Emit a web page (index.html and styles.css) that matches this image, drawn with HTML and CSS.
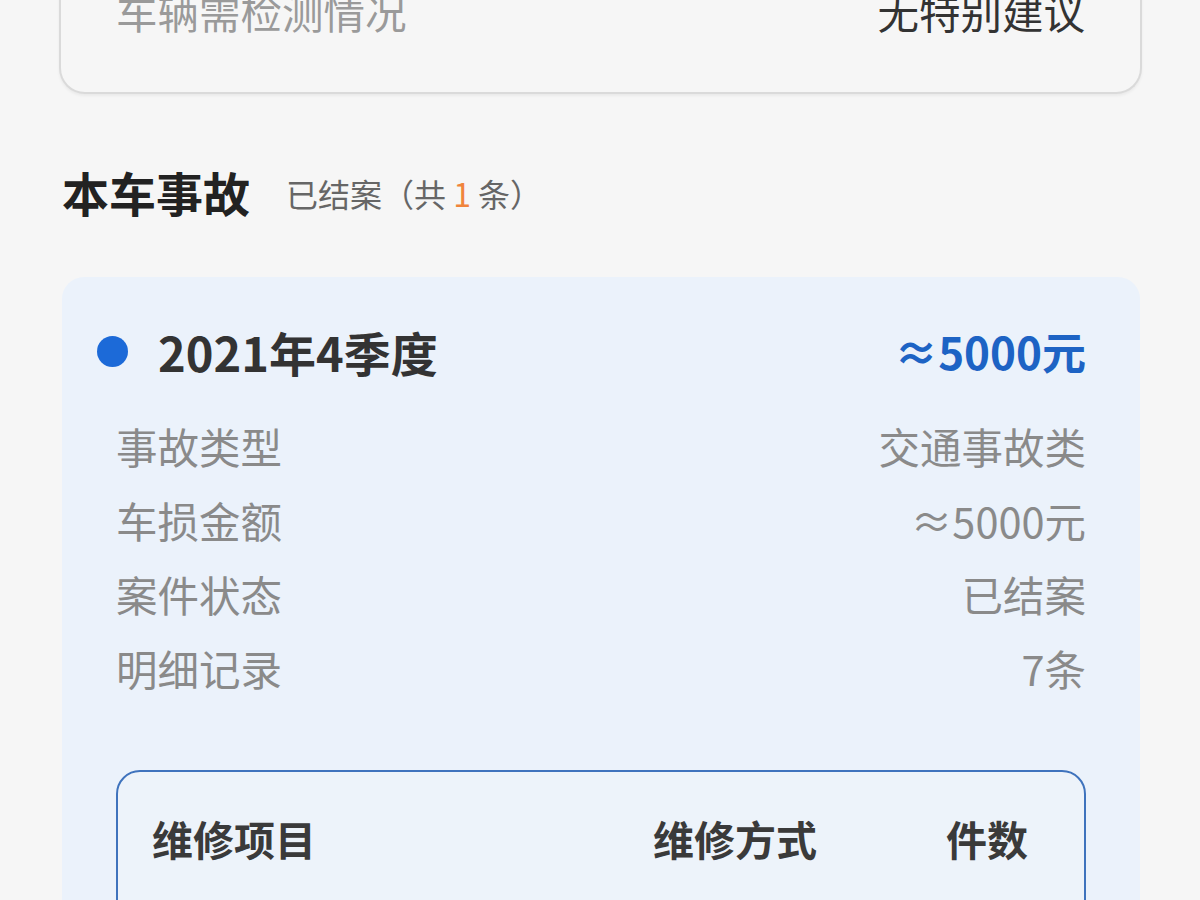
FILE: index.html
```html
<!DOCTYPE html>
<html lang="zh-CN">
<head>
<meta charset="utf-8">
<title>本车事故</title>
<link rel="stylesheet" href="styles.css">
</head>
<body>
<div class="page">
  <section class="check-card">
    <div class="kv-row">
      <span class="kv-label">车辆需检测情况</span>
      <span class="kv-value dark">无特别建议</span>
    </div>
  </section>

  <div class="section-head">
    <h2 class="section-title">本车事故</h2>
    <span class="section-sub">已结案（共 <em class="count">1</em> 条）</span>
  </div>

  <section class="accident-card">
    <div class="accident-head">
      <span class="dot"></span>
      <span class="period">2021年4季度</span>
      <span class="amount">≈5000元</span>
    </div>
    <div class="kv-list">
      <div class="kv-row"><span class="kv-label">事故类型</span><span class="kv-value">交通事故类</span></div>
      <div class="kv-row"><span class="kv-label">车损金额</span><span class="kv-value">≈5000元</span></div>
      <div class="kv-row"><span class="kv-label">案件状态</span><span class="kv-value">已结案</span></div>
      <div class="kv-row"><span class="kv-label">明细记录</span><span class="kv-value">7条</span></div>
    </div>
    <div class="repair-table">
      <div class="repair-head">
        <span>维修项目</span>
        <span>维修方式</span>
        <span class="col-num">件数</span>
      </div>
    </div>
  </section>
</div>
</body>
</html>
```
FILE: styles.css
```css
* { box-sizing: border-box; }
html, body {
  margin: 0;
  padding: 0;
  background: #f6f6f6;
  font-family: "Noto Sans CJK SC", "Noto Sans", sans-serif;
  overflow: hidden;
  height: 900px;
}
.page {
  padding: 0 58px 0 59px;
}
.check-card {
  margin-top: -50px;
  padding: 37px 55px 57px 55px;
  border: 2px solid #dadada;
  border-top: none;
  border-radius: 0 0 26px 26px;
  background: #f6f6f6;
  box-shadow: 0 2px 3px rgba(0,0,0,0.05);
}
.kv-row {
  display: flex;
  justify-content: space-between;
  align-items: center;
  height: 48px;
  font-size: 41.5px;
  line-height: 48px;
}
.kv-label { color: #9a9a9a; }
.kv-value { color: #8a8a8a; }
.kv-value.dark { color: #333; }

.section-head {
  display: flex;
  align-items: center;
  gap: 36px;
  margin-top: 68px;
  height: 60px;
  padding-left: 3px;
}
.section-title {
  margin: 0;
  font-size: 47px;
  font-weight: 700;
  color: #222;
  line-height: 60px;
}
.section-sub {
  font-size: 32px;
  color: #666;
  padding-top: 2px;
}
.count {
  font-style: normal;
  color: #f0843c;
}

.accident-card {
  margin: 55px 2px 0 3px;
  background: #ebf2fb;
  border-radius: 22px;
  padding: 44px 54px 60px 54px;
  height: 700px;
}
.accident-head {
  display: flex;
  align-items: center;
  height: 60px;
  margin-left: -19px;
}
.dot {
  width: 31px;
  height: 31px;
  border-radius: 50%;
  background: #1c6ad8;
  flex: none;
}
.period {
  margin-left: 30px;
  font-size: 47px;
  font-weight: 700;
  color: #333;
  flex: 1;
}
.amount {
  font-size: 44px;
  font-weight: 700;
  color: #1d63c4;
}
.kv-list {
  margin-top: 28px;
}
.kv-list .kv-row {
  height: 74px;
  line-height: 74px;
}
.kv-list .kv-label { color: #8a8a8a; }

.repair-table {
  margin-top: 65px;
  border: 2px solid #3f73bd;
  border-radius: 24px;
  background: #edf3fa;
  padding: 36px 56px 60px 34px;
  height: 300px;
}
.repair-head {
  display: grid;
  grid-template-columns: 1fr 215px 160px;
  align-items: center;
  height: 56px;
  font-size: 41px;
  font-weight: 700;
  color: #3a3a3a;
}
.col-num { text-align: right; }
```
